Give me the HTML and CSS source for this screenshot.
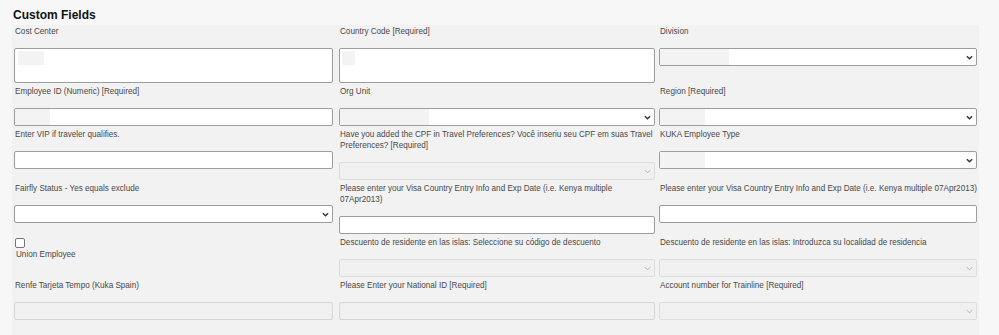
FILE: index.html
```html
<!DOCTYPE html>
<html lang="en">
<head>
  <meta charset="UTF-8" />
  <title>Custom Fields</title>
  <link rel="stylesheet" href="styles.css">
</head>
<body>
  <h2 class="section-title">Custom Fields</h2>

  <section class="fields">
    <!-- row 1 -->
    <div class="field">
      <label>Cost Center</label>
      <div class="control">
        <textarea class="tall"></textarea>
        <span class="mask mask-cost"></span>
      </div>
    </div>
    <div class="field">
      <label>Country Code [Required]</label>
      <div class="control">
        <textarea class="tall"></textarea>
        <span class="mask mask-country"></span>
      </div>
    </div>
    <div class="field">
      <label>Division</label>
      <div class="control select-wrap">
        <select></select>
        <span class="mask mask-division"></span>
        <svg class="chevron" viewBox="0 0 8 5"><path d="M1 1 L4 4 L7 1"/></svg>
      </div>
    </div>

    <!-- row 2 -->
    <div class="field">
      <label>Employee ID (Numeric) [Required]</label>
      <div class="control">
        <input type="text">
        <span class="mask mask-empid"></span>
      </div>
    </div>
    <div class="field">
      <label>Org Unit</label>
      <div class="control select-wrap">
        <select></select>
        <span class="mask mask-org"></span>
        <svg class="chevron" viewBox="0 0 8 5"><path d="M1 1 L4 4 L7 1"/></svg>
      </div>
    </div>
    <div class="field">
      <label>Region [Required]</label>
      <div class="control select-wrap">
        <select></select>
        <span class="mask mask-region"></span>
        <svg class="chevron" viewBox="0 0 8 5"><path d="M1 1 L4 4 L7 1"/></svg>
      </div>
    </div>

    <!-- row 3 -->
    <div class="field">
      <label>Enter VIP if traveler qualifies.</label>
      <div class="control">
        <input type="text">
      </div>
    </div>
    <div class="field">
      <label>Have you added the CPF in Travel Preferences? Você inseriu seu CPF em suas Travel Preferences? [Required]</label>
      <div class="control select-wrap disabled">
        <select disabled></select>
        <svg class="chevron" viewBox="0 0 8 5"><path d="M1 1 L4 4 L7 1"/></svg>
      </div>
    </div>
    <div class="field">
      <label>KUKA Employee Type</label>
      <div class="control select-wrap">
        <select></select>
        <span class="mask mask-kuka"></span>
        <svg class="chevron" viewBox="0 0 8 5"><path d="M1 1 L4 4 L7 1"/></svg>
      </div>
    </div>

    <!-- row 4 -->
    <div class="field">
      <label>Fairfly Status - Yes equals exclude</label>
      <div class="control select-wrap">
        <select></select>
        <svg class="chevron" viewBox="0 0 8 5"><path d="M1 1 L4 4 L7 1"/></svg>
      </div>
    </div>
    <div class="field">
      <label>Please enter your Visa Country Entry Info and Exp Date (i.e. Kenya multiple 07Apr2013)</label>
      <div class="control">
        <input type="text">
      </div>
    </div>
    <div class="field">
      <label class="single-line">Please enter your Visa Country Entry Info and Exp Date (i.e. Kenya multiple 07Apr2013)</label>
      <div class="control">
        <input type="text">
      </div>
    </div>

    <!-- row 5 -->
    <div class="field field-check">
      <input type="checkbox" id="unionEmployee">
      <label for="unionEmployee">Union Employee</label>
    </div>
    <div class="field">
      <label>Descuento de residente en las islas: Seleccione su código de descuento</label>
      <div class="control select-wrap disabled">
        <select disabled></select>
        <svg class="chevron" viewBox="0 0 8 5"><path d="M1 1 L4 4 L7 1"/></svg>
      </div>
    </div>
    <div class="field">
      <label>Descuento de residente en las islas: Introduzca su localidad de residencia</label>
      <div class="control select-wrap disabled">
        <select disabled></select>
        <svg class="chevron" viewBox="0 0 8 5"><path d="M1 1 L4 4 L7 1"/></svg>
      </div>
    </div>

    <!-- row 6 -->
    <div class="field">
      <label>Renfe Tarjeta Tempo (Kuka Spain)</label>
      <div class="control">
        <input type="text" disabled>
      </div>
    </div>
    <div class="field">
      <label>Please Enter your National ID [Required]</label>
      <div class="control">
        <input type="text" disabled>
      </div>
    </div>
    <div class="field">
      <label>Account number for Trainline [Required]</label>
      <div class="control select-wrap disabled">
        <select disabled></select>
        <svg class="chevron" viewBox="0 0 8 5"><path d="M1 1 L4 4 L7 1"/></svg>
      </div>
    </div>
  </section>
</body>
</html>
```

FILE: styles.css
```css
/* General Reset */
* {
    margin: 0;
    padding: 0;
    box-sizing: border-box;
}
body {
    font-family: 'Liberation Sans', Arial, sans-serif;
    background-color: #f7f7f7;
    color: #444;
    overflow: hidden;
}
.section-title {
    padding: 7px 0 0 13px;
    font-size: 12px;
    line-height: 16px;
    font-weight: bold;
    color: #111;
    margin-bottom: 2px;
}
.fields {
    margin-left: 12px;
    width: 967px;
    padding: 1px 0 12px 2px;
    background: #f2f2f2;
    display: grid;
    grid-template-columns: 325px 320px 320px;
    align-items: start;
}
.field {
    padding-bottom: 3px;
}
.field:nth-child(3n+1) {
    padding-right: 6px;
}
.field:nth-child(3n+2) {
    padding-right: 4px;
}
.field:nth-child(3n) {
    padding-right: 2px;
}
.field label {
    display: block;
    padding-left: 1px;
    font-size: 8.15px;
    line-height: 11px;
    margin-bottom: 11px;
    color: #484848;
}
.field label.single-line {
    white-space: nowrap;
}
.control {
    position: relative;
}
.control input[type="text"],
.control select,
.control textarea {
    display: block;
    width: 100%;
    height: 18px;
    border: 1px solid #9d9d9d;
    border-radius: 2px;
    background: #fff;
    font-family: inherit;
    font-size: 8px;
    outline: none;
    appearance: none;
    -webkit-appearance: none;
}
.control textarea.tall {
    height: 35px;
    resize: none;
}
.control input[type="text"]:disabled,
.control select:disabled {
    background: #f0f0f0;
    border-color: #d6d6d6;
}
.mask {
    position: absolute;
    top: 1px;
    left: 1px;
    height: 16px;
    background: #f3f3f3;
}
.mask-cost {
    top: 3px;
    left: 4px;
    width: 26px;
    height: 14px;
}
.mask-country {
    top: 3px;
    left: 3px;
    width: 13px;
    height: 14px;
}
.mask-division { width: 69px; }
.mask-empid { width: 35px; }
.mask-org { width: 89px; }
.mask-region,
.mask-kuka { width: 45px; }
.chevron {
    position: absolute;
    right: 4px;
    top: 7px;
    width: 7px;
    height: 5px;
    fill: none;
    stroke: #333;
    stroke-width: 1.6;
}
.disabled .chevron {
    stroke: #a8a8a8;
    stroke-width: 1;
}
.field-check {
    padding-top: 1px;
}
.field-check input[type="checkbox"] {
    display: block;
    width: 10px;
    height: 10px;
    margin-left: 1px;
    border: 1px solid #767676;
    border-radius: 2px;
    background: #fff;
    appearance: none;
    -webkit-appearance: none;
}
.field-check label {
    margin-top: 1px;
    padding-left: 2px;
    margin-bottom: 0;
}
```
